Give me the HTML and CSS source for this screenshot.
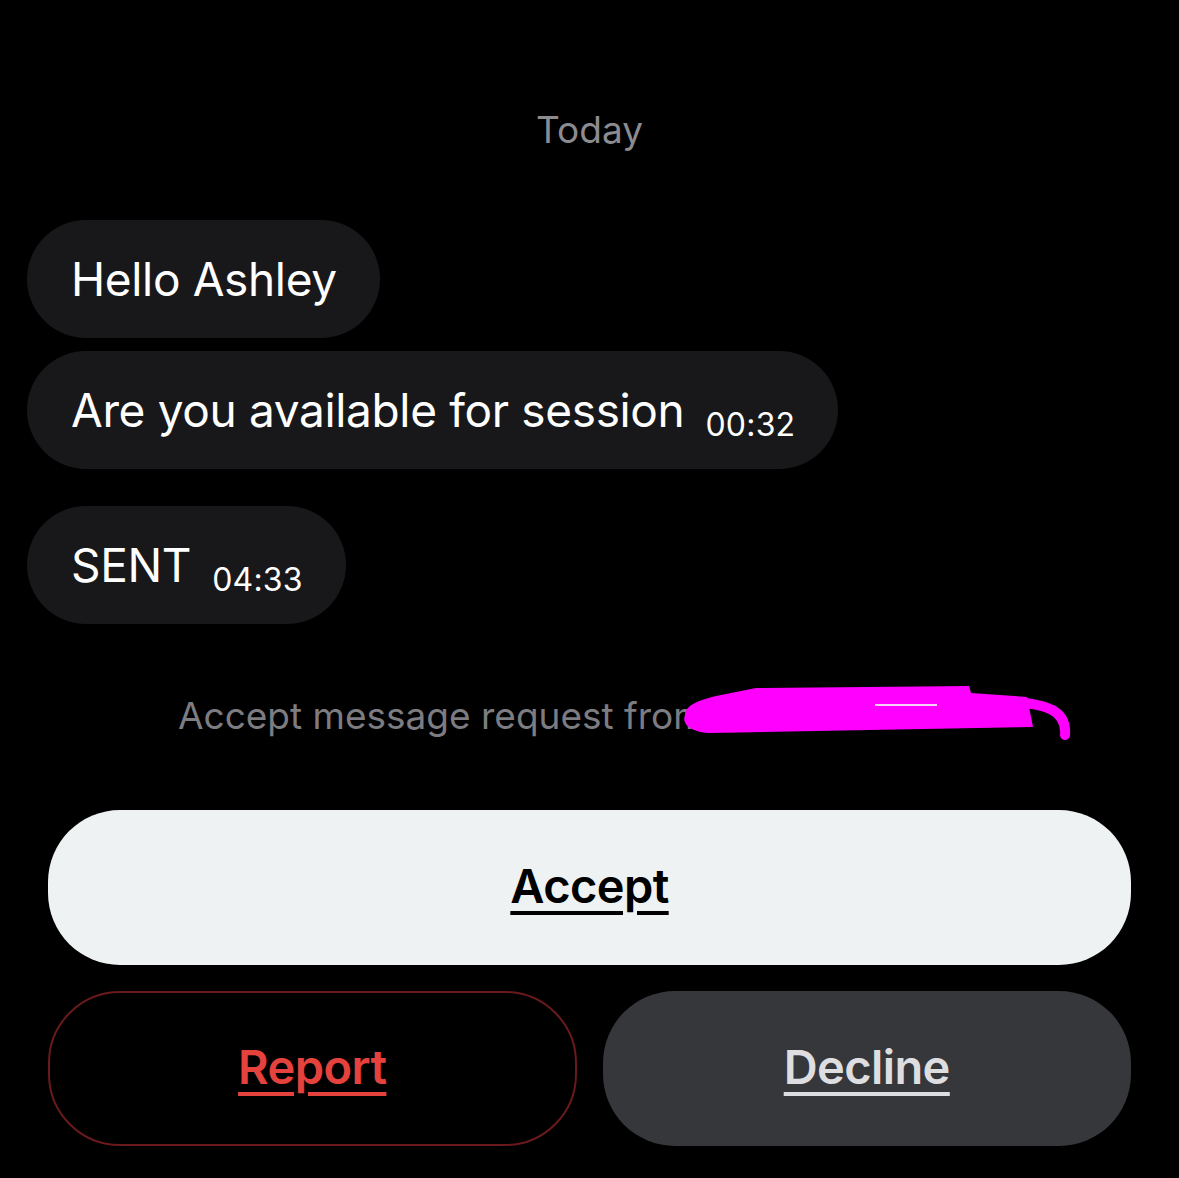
FILE: index.html
```html
<!DOCTYPE html>
<html lang="en">
<head>
	<meta charset="UTF-8">
	<title>Message request</title>
	<link rel="stylesheet" href="styles.css">
</head>
<body>
<div class="screen">
	<p class="day">Today</p>

	<div class="thread">
		<div class="bubble">
			<span class="text">Hello Ashley</span>
		</div>
		<div class="bubble">
			<span class="text">Are you available for session</span>
			<span class="time">00:32</span>
		</div>
		<div class="bubble bubble-gap">
			<span class="text">SENT</span>
			<span class="time">04:33</span>
		</div>
	</div>

	<div class="request">
		<p class="request-text">Accept message request from someone</p>
		<!-- redaction scribble -->
		<svg class="scribble" width="410" height="66" viewBox="0 0 410 66">
			<path d="M14 36 C 14 26, 30 20, 50 16 L 85 9 L 298 7 L 300 14 L 356 18 L 362 48 L 40 54 C 22 54, 10 46, 14 36 Z"
				  fill="#ff00ff"/>
			<path d="M330 22 C 378 24, 396 32, 394 56"
				  fill="none" stroke="#ff00ff" stroke-width="10" stroke-linecap="round"/>
			<path d="M204 26 L 266 26" stroke="#f6d0f6" stroke-width="2"/>
		</svg>
	</div>

	<div class="actions">
		<button class="btn btn-accept"><span>Accept</span></button>
		<div class="row">
			<button class="btn btn-report"><span>Report</span></button>
			<button class="btn btn-decline"><span>Decline</span></button>
		</div>
	</div>
</div>
</body>
</html>
```

FILE: styles.css
```css
* {
	margin: 0;
	padding: 0;
	box-sizing: border-box;
}

html, body {
	background: #000;
}

body {
	font-family: Inter, "Noto Sans", "Liberation Sans", sans-serif;
	color: #fff;
}

.screen {
	width: 1179px;
	height: 1178px;
	padding-top: 107px;
}

.day {
	text-align: center;
	font-size: 37px;
	line-height: 46px;
	color: #8b8b90;
}

.thread {
	display: flex;
	flex-direction: column;
	align-items: flex-start;
	gap: 13px;
	padding: 67px 0 0 27px;
}
.bubble {
	display: flex;
	align-items: baseline;
	gap: 21px;
	height: 118px;
	padding: 0 43px 0 44px;
	border-radius: 59px;
	background-color: #18181a;
}
.bubble .text {
	font-size: 46px;
	line-height: 118px;
	letter-spacing: -0.35px;
}
.bubble .time {
	font-size: 32px;
	position: relative;
	top: 9px;
	letter-spacing: 0.2px;
}
.bubble-gap {
	margin-top: 24px;
}

.request {
	position: relative;
	margin-top: 62px;
	height: 60px;
}
.request-text {
	padding-left: 178px;
	font-size: 37px;
	line-height: 60px;
	color: #7c7c81;
	white-space: nowrap;
}
.scribble {
	position: absolute;
	left: 671px;
	top: -7px;
}

.actions {
	display: flex;
	flex-direction: column;
	gap: 26px;
	padding: 64px 48px 0 48px;
}
.row {
	display: grid;
	grid-template-columns: 1fr 1fr;
	gap: 26px;
}
.btn {
	height: 155px;
	border: none;
	border-radius: 72px;
	font-family: Inter, "Noto Sans", "Liberation Sans", sans-serif;
	font-size: 47px;
	font-weight: 600;
	letter-spacing: -0.6px;
	text-decoration: underline;
	text-decoration-thickness: 4px;
	text-underline-offset: 6px;
	cursor: pointer;
}
.btn span {
	position: relative;
	top: -2px;
}
.btn-accept {
	width: 100%;
	background-color: #eff2f3;
	color: #000;
}
.btn-report {
	background-color: #000;
	border: 2px solid #6a1a1c;
	color: #e5423d;
}
.btn-decline {
	background-color: #36373b;
	color: #dedee0;
}
```
